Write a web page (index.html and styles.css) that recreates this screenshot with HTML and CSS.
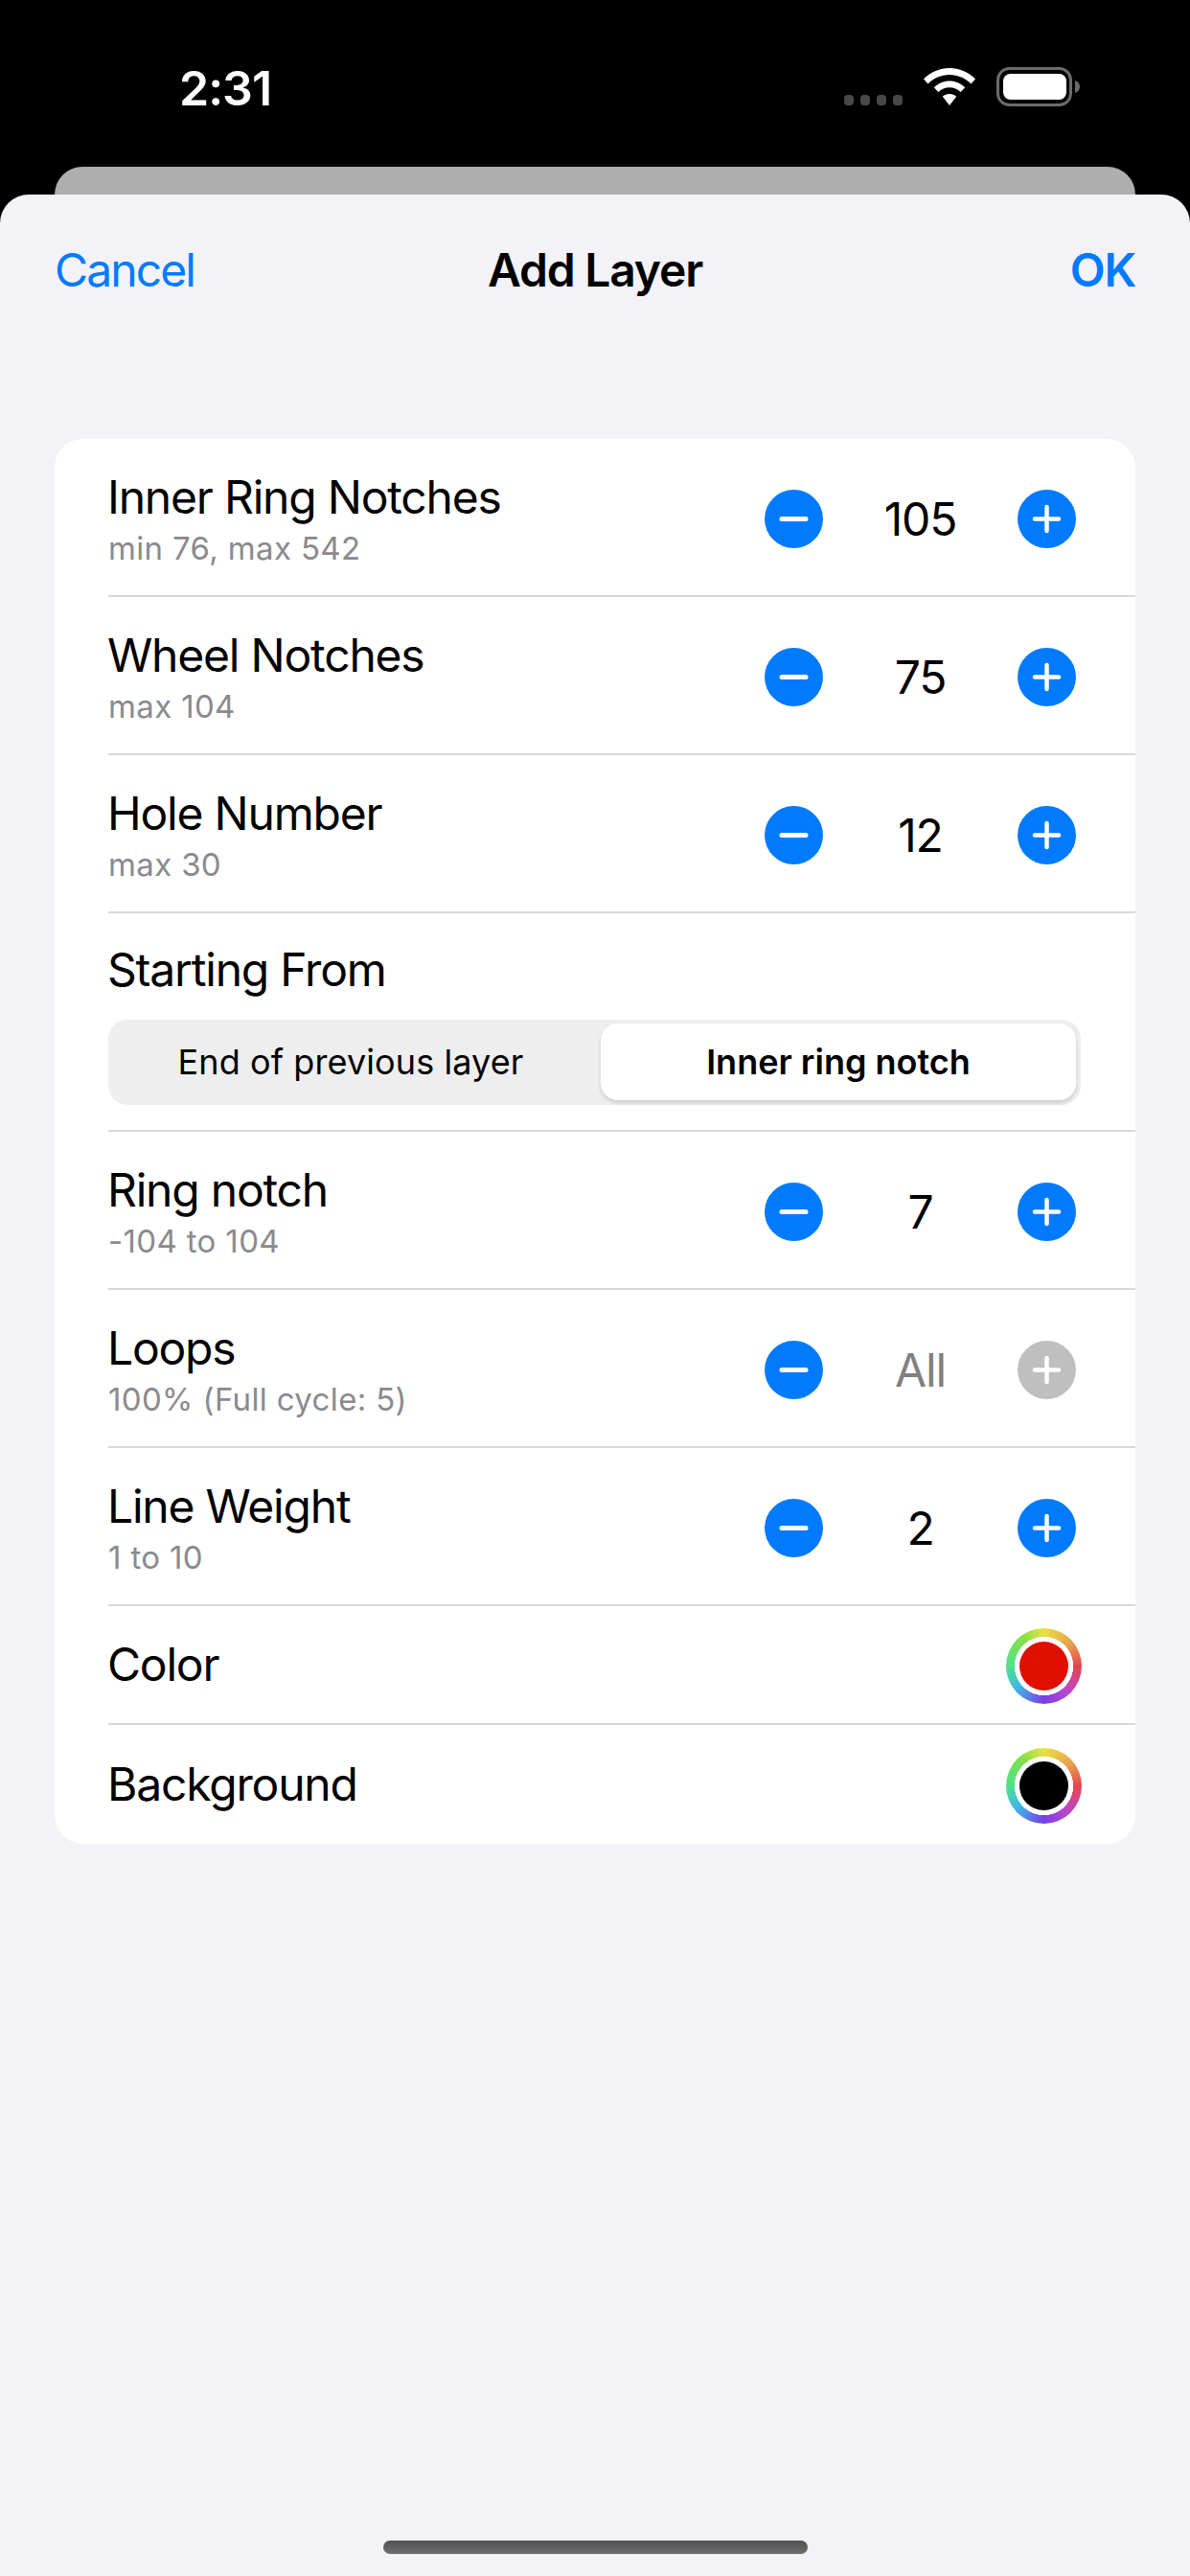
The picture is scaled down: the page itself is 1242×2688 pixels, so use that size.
FILE: index.html
```html
<!DOCTYPE html>
<html lang="en">
<head>
<meta charset="utf-8">
<title>Add Layer</title>
<link rel="stylesheet" href="styles.css">
</head>
<body>
<div class="screen">
  <div class="status">
    <span class="time">2:31</span>
    <div class="status-icons">
      <div class="dots"><i></i><i></i><i></i><i></i></div>
      <svg class="wifi" width="54" height="39" viewBox="0 0 54 39"><path d="M27 0C37 0 46.500 4 54 11.500L49.500 16.500C43.500 10.500 35.500 7 27 7S10.500 10.500 4.500 16.500L0 11.500C7.500 4 17 0 27 0Z M27 13.500C33 13.500 38.800 16 43.200 20.200L38.700 25C35.500 22 31.400 20.300 27 20.300S18.500 22 15.300 25L10.800 20.200C15.200 16 21 13.500 27 13.500Z M27 27C29.700 27 32.200 28 34.200 29.800L27 39L19.800 29.800C21.800 28 24.300 27 27 27Z" fill="#fff"/></svg>
      <svg class="battery" width="87" height="41" viewBox="0 0 87 41"><rect x="1.500" y="1.500" width="76" height="38" rx="12" fill="none" stroke="#6b6b6b" stroke-width="3"/><rect x="7" y="7" width="66" height="27" rx="7.500" fill="#fff"/><path d="M82 14C85 15 87 17.500 87 20.500S85 26 82 27Z" fill="#6b6b6b"/></svg>
    </div>
  </div>
  <div class="back-card"></div>
  <div class="sheet">
    <header class="nav">
      <span class="nav-btn">Cancel</span>
      <span class="nav-title">Add Layer</span>
      <span class="nav-btn nav-ok">OK</span>
    </header>
    <div class="card">
      <div class="row">
        <div class="label"><div class="name">Inner Ring Notches</div><div class="hint">min 76, max 542</div></div>
        <div class="stepper">
          <span class="btn"><svg viewBox="0 0 61 61"><path d="M18 30.500H43"/></svg></span>
          <span class="value">105</span>
          <span class="btn btn-plus"><svg viewBox="0 0 61 61"><path d="M18 30.500H43M30.500 18V43"/></svg></span>
        </div>
      </div>
      <div class="row">
        <div class="label"><div class="name">Wheel Notches</div><div class="hint">max 104</div></div>
        <div class="stepper">
          <span class="btn"><svg viewBox="0 0 61 61"><path d="M18 30.500H43"/></svg></span>
          <span class="value">75</span>
          <span class="btn btn-plus"><svg viewBox="0 0 61 61"><path d="M18 30.500H43M30.500 18V43"/></svg></span>
        </div>
      </div>
      <div class="row">
        <div class="label"><div class="name">Hole Number</div><div class="hint">max 30</div></div>
        <div class="stepper">
          <span class="btn"><svg viewBox="0 0 61 61"><path d="M18 30.500H43"/></svg></span>
          <span class="value">12</span>
          <span class="btn btn-plus"><svg viewBox="0 0 61 61"><path d="M18 30.500H43M30.500 18V43"/></svg></span>
        </div>
      </div>
      <div class="row row-seg">
        <div class="name">Starting From</div>
        <div class="segment">
          <span class="seg">End of previous layer</span>
          <span class="seg seg-on">Inner ring notch</span>
        </div>
      </div>
      <div class="row">
        <div class="label"><div class="name">Ring notch</div><div class="hint">-104 to 104</div></div>
        <div class="stepper">
          <span class="btn"><svg viewBox="0 0 61 61"><path d="M18 30.500H43"/></svg></span>
          <span class="value">7</span>
          <span class="btn btn-plus"><svg viewBox="0 0 61 61"><path d="M18 30.500H43M30.500 18V43"/></svg></span>
        </div>
      </div>
      <div class="row">
        <div class="label"><div class="name">Loops</div><div class="hint">100% (Full cycle: 5)</div></div>
        <div class="stepper">
          <span class="btn"><svg viewBox="0 0 61 61"><path d="M18 30.500H43"/></svg></span>
          <span class="value value-off">All</span>
          <span class="btn btn-plus btn-off"><svg viewBox="0 0 61 61"><path d="M18 30.500H43M30.500 18V43"/></svg></span>
        </div>
      </div>
      <div class="row">
        <div class="label"><div class="name">Line Weight</div><div class="hint">1 to 10</div></div>
        <div class="stepper">
          <span class="btn"><svg viewBox="0 0 61 61"><path d="M18 30.500H43"/></svg></span>
          <span class="value">2</span>
          <span class="btn btn-plus"><svg viewBox="0 0 61 61"><path d="M18 30.500H43M30.500 18V43"/></svg></span>
        </div>
      </div>
      <div class="row row-color">
        <div class="name">Color</div>
        <span class="well"><span class="swatch swatch-red"></span></span>
      </div>
      <div class="row row-color">
        <div class="name">Background</div>
        <span class="well"><span class="swatch swatch-black"></span></span>
      </div>
    </div>
    <div class="home-bar"><span class="home"></span></div>
  </div>
</div>
</body>
</html>
```
FILE: styles.css
```css
* { box-sizing: border-box; }
html, body { margin: 0; padding: 0; background: #000; }
body { font-family: Inter, "Liberation Sans", sans-serif; color: #000; }
.screen { width: 1242px; height: 2688px; display: flex; flex-direction: column; background: #000; overflow: hidden; }

.status { height: 174px; flex: none; display: flex; justify-content: space-between; align-items: flex-start; padding: 62px 115px 0 187px; }
.time { color: #fff; font-size: 50px; font-weight: 600; line-height: 60px; letter-spacing: -1px; }
.status-icons { display: flex; align-items: flex-start; margin-top: 8px; }
.dots { display: flex; gap: 7px; margin: 29px 22px 0 0; }
.dots i { width: 10px; height: 11px; border-radius: 4px; background: #484848; }
.wifi { margin: 1px 22px 0 0; }

.back-card { height: 29px; flex: none; margin: 0 57px; background: #aeaeae; border-radius: 30px 30px 0 0; }
.sheet { flex: 1; display: flex; flex-direction: column; background: #f2f2f7; border-radius: 30px 30px 0 0; padding: 0 57px; }

.nav { height: 255px; flex: none; display: grid; grid-template-columns: 1fr auto 1fr; align-items: start; padding-top: 49px; }
.nav-btn { font-size: 48px; line-height: 60px; color: #007aff; letter-spacing: -1.9px; }
.nav-ok { font-weight: 600; justify-self: end; letter-spacing: -1.2px; }
.nav-title { font-size: 48px; line-height: 60px; font-weight: 600; letter-spacing: -1.2px; }

.card { background: #fff; border-radius: 30px; padding-left: 56px; }
.row { height: 165px; display: flex; align-items: center; justify-content: space-between; border-bottom: 2px solid #d9d9dc; padding-right: 62px; }
.row:last-child { border-bottom: 0; }
.row-seg { height: 228px; flex-direction: column; align-items: stretch; justify-content: flex-start; padding: 31px 57px 0 0; }
.row-color { height: 124px; padding-right: 56px; }
.label { margin-top: 4px; }
.name { font-size: 48px; line-height: 56px; letter-spacing: -1.2px; margin-left: -1px; }
.hint { font-size: 33px; line-height: 40px; color: #8a8a8e; margin-top: 5px; letter-spacing: 0.35px; }

.stepper { display: flex; align-items: center; margin-top: 4px; }
.btn { width: 61px; height: 61px; border-radius: 50%; background: #007aff; display: block; }
.btn svg { display: block; width: 61px; height: 61px; stroke: #fff; stroke-width: 5px; stroke-linecap: round; fill: none; }
.btn-plus svg { stroke-width: 4.5px; }
.btn-off { background: #bfbfbf; }
.value { width: 203px; text-align: center; font-size: 48px; line-height: 56px; letter-spacing: -1.2px; }
.value-off { color: #808080; }

.segment { display: flex; gap: 13px; height: 89px; margin-top: 24px; padding: 4px 5px 5px; background: #eeeeef; border-radius: 20px; }
.seg { flex: none; width: 496px; display: flex; align-items: center; justify-content: center; font-size: 36px; font-weight: 400; letter-spacing: 0.1px; }
.seg-on { font-weight: 600; letter-spacing: 0; background: #fff; border-radius: 18px; box-shadow: 0 3px 4px rgba(0,0,0,0.13); }

.well { width: 79px; height: 79px; border-radius: 50%; padding: 14px; display: block; margin-top: 2px; background: radial-gradient(circle closest-side, #fff 0 77%, transparent 78%), conic-gradient(from 0deg, #e9e144 0deg, #e8a050 50deg, #e8454f 90deg, #b647d0 140deg, #7a3fe6 180deg, #3fb6e8 230deg, #4fe28a 270deg, #7fe04a 320deg, #e9e144 360deg); }
.swatch { display: block; width: 51px; height: 51px; border-radius: 50%; }
.swatch-red { background: #e01000; }
.swatch-black { background: #000; }

.home-bar { flex: 1; display: flex; align-items: flex-end; justify-content: center; padding-bottom: 23px; }
.home { width: 443px; height: 14px; border-radius: 7px; background: linear-gradient(#505052, #6e6e6e); }
```
